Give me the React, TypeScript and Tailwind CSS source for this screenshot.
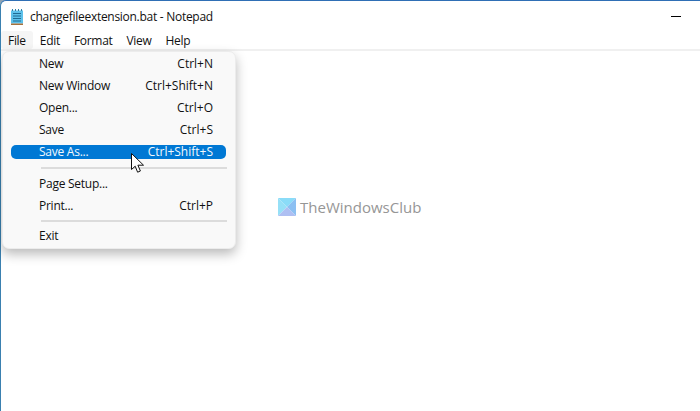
const menuBar = ['File', 'Edit', 'Format', 'View', 'Help'];

type Item = { label: string; shortcut?: string; active?: boolean };

const groups: Item[][] = [
  [
    { label: 'New', shortcut: 'Ctrl+N' },
    { label: 'New Window', shortcut: 'Ctrl+Shift+N' },
    { label: 'Open...', shortcut: 'Ctrl+O' },
    { label: 'Save', shortcut: 'Ctrl+S' },
    { label: 'Save As...', shortcut: 'Ctrl+Shift+S', active: true },
  ],
  [{ label: 'Page Setup...' }, { label: 'Print...', shortcut: 'Ctrl+P' }],
  [{ label: 'Exit' }],
];

function NotepadIcon() {
  return (
    <svg width="12" height="16" viewBox="0 0 12 16" className="shrink-0">
      <rect x="0" y="1.5" width="12" height="13" fill="#5cc0ea" />
      <rect x="0" y="14.5" width="12" height="1.5" fill="#a5713c" />
      <path d="M1.5 0v2M4.5 0v2M7.5 0v2M10.5 0v2" stroke="#2b7fa8" strokeWidth="1" />
      <path d="M2 4.5h8M2 7h8M2 9.5h8M2 12h8" stroke="#1f6a92" strokeWidth="1" />
    </svg>
  );
}

function Cursor() {
  return (
    <svg width="14" height="21" viewBox="0 0 14 21" className="absolute left-[131px] top-[153px]">
      <path
        d="M0.5 0.5V16.5L4.2 13.2L6.6 19.2L9.4 18L6.9 12.2H12.5Z"
        fill="#fff"
        stroke="#111"
        strokeWidth="1"
      />
    </svg>
  );
}

function Logo() {
  return (
    <svg width="18" height="18" viewBox="0 0 18 18" className="shrink-0">
      <path d="M0 0H18L9 9Z" fill="#8adcf8" />
      <path d="M0 0V18L9 9Z" fill="#96e0f7" />
      <path d="M18 0V18L9 9Z" fill="#8cc0f2" />
      <path d="M0 18H18L9 9Z" fill="#aebff2" />
    </svg>
  );
}

export default function App() {
  return (
    <div className="relative w-[700px] h-[411px] overflow-hidden bg-[#8fa3b5] font-['Open_Sans','Liberation_Sans',sans-serif] text-[12px] text-[#111]">
      <div className="h-[411px] bg-white border-t border-l border-t-[#2f6fb5] border-l-[#3a80b0] rounded-tl-[6px] flex flex-col">
        {/* Title bar */}
        <div className="h-[30px] flex items-center gap-[7px] pl-[10px] pt-[1px]">
          <NotepadIcon />
          <span className="tracking-[-0.28px]">changefileextension.bat - Notepad</span>
          <div className="ml-auto mr-[19px] w-[10px] h-px bg-black" />
        </div>

        {/* Menu bar */}
        <div className="h-[18px] flex items-center border-b-2 border-[#f0f0f0] box-content">
          <div className="flex items-center tracking-[-0.3px]">
            {menuBar.map((name) => (
              <span
                key={name}
                className={
                  name === 'File'
                    ? 'h-[18px] flex items-center px-[7px] pt-[1px] bg-[#f5f5f5] rounded-[3px]'
                    : 'h-[18px] flex items-center px-[7px] pt-[1px]'
                }
              >
                {name}
              </span>
            ))}
          </div>
        </div>

        {/* Editor area with watermark */}
        <div className="flex-1 flex items-start pl-[277px] pt-[145px]">
          <div className="flex items-center gap-[4px]">
            <Logo />
            <span className="text-[15px] text-[#969696]">TheWindowsClub</span>
          </div>
        </div>
      </div>

      {/* File menu */}
      <div className="absolute left-[2px] top-[51px] w-[234px] h-[198px] bg-[#f9f9f9] rounded-[7px] border border-[#ececec] shadow-[0_5px_12px_rgba(0,0,0,0.28)] pt-[1px]">
        {groups.map((group, i) => (
          <div key={i}>
            {i > 0 && (
              <div
                className={
                  i === 1
                    ? 'ml-[38px] mr-[8px] mt-[4px] mb-[4px] h-[2px] bg-[#dcdcdc]'
                    : 'ml-[38px] mr-[8px] mt-[3px] mb-[3px] h-[2px] bg-[#dcdcdc]'
                }
              />
            )}
            {group.map((item) => (
              <div key={item.label} className="h-[22px] flex items-center">
                <div
                  className={
                    item.active
                      ? 'w-[215px] ml-[8px] h-[14px] flex items-center justify-between pl-[28px] pr-[13px] bg-[#0078d4] text-[#f2f8fd] rounded-[5px]'
                      : 'w-[215px] ml-[8px] h-[14px] flex items-center justify-between pl-[28px] pr-[13px]'
                  }
                >
                  <span className="tracking-[-0.25px]">{item.label}</span>
                  {item.shortcut && <span>{item.shortcut}</span>}
                </div>
              </div>
            ))}
          </div>
        ))}
      </div>

      <Cursor />
    </div>
  );
}
